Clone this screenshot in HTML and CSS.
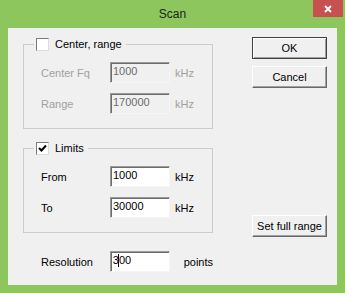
FILE: index.html
```html
<!DOCTYPE html>
<html lang="en">
<head>
  <meta charset="UTF-8">
  <title>Scan</title>
  <link rel="stylesheet" href="styles.css">
</head>
<body>

<div class="window">
  <div class="titlebar">
    <span></span>
    <span class="title">Scan</span>
    <span class="close">
      <svg width="8" height="8" viewBox="0 0 8 8"><path d="M1 1 L7 7 M7 1 L1 7" stroke="#fff" stroke-width="1.8"/></svg>
    </span>
  </div>

  <div class="client">
    <div class="left">
      <fieldset class="group">
        <legend><span class="check"></span>Center, range</legend>
        <div class="rows">
          <div class="row disabled">
            <span class="lbl">Center Fq</span>
            <span class="edit">1000</span>
            <span class="unit">kHz</span>
          </div>
          <div class="row disabled">
            <span class="lbl">Range</span>
            <span class="edit">170000</span>
            <span class="unit">kHz</span>
          </div>
        </div>
      </fieldset>

      <fieldset class="group limits">
        <legend>
          <span class="check"><svg width="9" height="9" viewBox="0 0 9 9"><path d="M1 4 L3.5 6.5 L8 1.5" fill="none" stroke="#000" stroke-width="2"/></svg></span>Limits
        </legend>
        <div class="rows">
          <div class="row">
            <span class="lbl">From</span>
            <span class="edit">1000</span>
            <span class="unit">kHz</span>
          </div>
          <div class="row">
            <span class="lbl">To</span>
            <span class="edit">30000</span>
            <span class="unit">kHz</span>
          </div>
        </div>
      </fieldset>

      <div class="row resolution">
        <span class="lbl">Resolution</span>
        <span class="edit">3<span class="caret"></span>00</span>
        <span class="unit">points</span>
      </div>
    </div>

    <div class="right">
      <button class="btn default">OK</button>
      <button class="btn">Cancel</button>
      <button class="btn full">Set full range</button>
    </div>
  </div>
</div>

</body>
</html>
```

FILE: styles.css
```css
body {
  margin: 0;
  font-family: "Liberation Sans", Arial, sans-serif;
  font-size: 11px;
  color: #000;
}
.window {
  width: 345px;
  height: 293px;
  box-sizing: border-box;
  padding: 0 8px 8px 8px;
  background: #8cc65c;
}
.titlebar {
  height: 28px;
  display: grid;
  grid-template-columns: 1fr auto 1fr;
  align-items: center;
  margin: 0 -8px;
}
.title {
  font-size: 12px;
  color: #1e1e1e;
}
.close {
  justify-self: end;
  align-self: start;
  width: 30px;
  height: 17px;
  margin-right: 2px;
  background: #c75050;
  display: flex;
  align-items: center;
  justify-content: center;
}
.close svg {
  display: block;
}
.client {
  height: 257px;
  background: #f0f0f0;
  display: flex;
}
.left {
  width: 190px;
  padding: 9px 0 0 15px;
}
.group {
  margin: 0;
  padding: 0;
  border: 1px solid #cbcbcb;
}
.limits {
  margin-top: 12px;
}
legend {
  margin-left: 10px;
  padding: 0 4px 0 2px;
  height: 14px;
  line-height: 14px;
  display: flex;
  align-items: center;
}
.check {
  width: 11px;
  height: 11px;
  margin-right: 6px;
  background: #fff;
  border: 1px solid;
  border-color: #7a7a7a #dcdcdc #dcdcdc #7a7a7a;
  display: flex;
  align-items: center;
  justify-content: center;
}
.check svg {
  display: block;
}
.rows {
  padding: 11px 0 14px 17px;
  display: flex;
  flex-direction: column;
  gap: 10px;
}
.row {
  display: flex;
  align-items: center;
}
.lbl {
  width: 69px;
}
.edit {
  width: 55px;
  height: 18px;
  padding: 2px 0 0 2px;
  box-sizing: content-box;
  line-height: 13px;
  background: #fff;
  border: 1px solid;
  border-color: #9a9a9a #f4f4f4 #f4f4f4 #9a9a9a;
  box-shadow: inset 1px 1px 0 #6b6b6b;
  width: 56px;
  height: 17px;
  padding: 2px 0 0 2px;
}
.unit {
  margin-left: 5px;
}
.disabled .lbl,
.disabled .unit {
  color: #a0a0a0;
}
.disabled .edit {
  background: #f0f0f0;
  color: #6d6d6d;
}
.resolution {
  margin-top: 18px;
  padding-left: 18px;
}
.resolution .unit {
  margin-left: 14px;
}
.caret {
  display: inline-block;
  width: 1px;
  height: 13px;
  margin-left: -1px;
  background: #000;
  vertical-align: top;
}
.right {
  margin-left: 39px;
  padding-top: 9px;
  display: flex;
  flex-direction: column;
  width: 75px;
}
.btn {
  width: 75px;
  height: 22px;
  padding: 0;
  font-family: inherit;
  font-size: 11px;
  color: #000;
  background: #f0f0f0;
  border: 1px solid;
  border-color: #fff #696969 #696969 #fff;
  box-shadow: inset -1px -1px 0 #a0a0a0;
}
.btn + .btn {
  margin-top: 7px;
}
.default {
  border-color: #404040;
  box-shadow: inset 1px 1px 0 #fff, inset -1px -1px 0 #a0a0a0;
}
.btn.full {
  margin-top: 127px;
}
```
